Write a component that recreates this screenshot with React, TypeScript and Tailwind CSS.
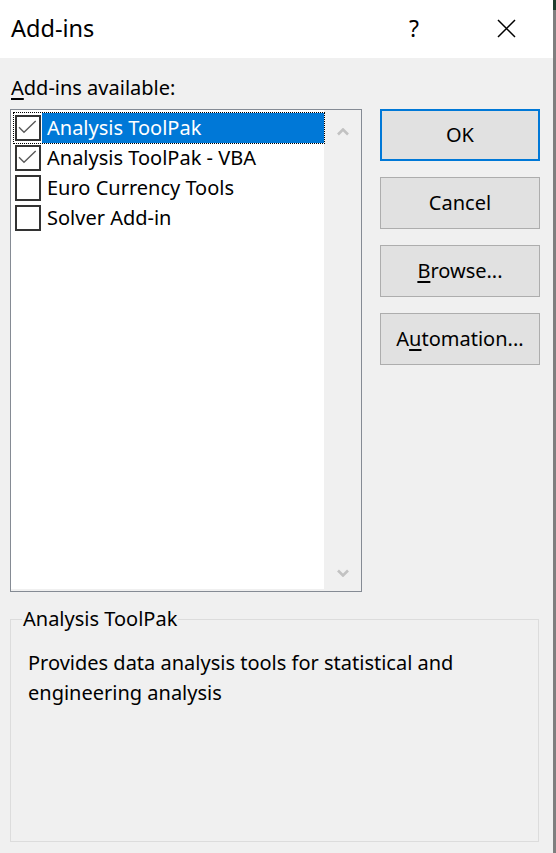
import React from 'react';

const font = { fontFamily: '"Noto Sans", "Liberation Sans", sans-serif' };

const items = [
  { label: 'Analysis ToolPak', checked: true, selected: true },
  { label: 'Analysis ToolPak - VBA', checked: true, selected: false },
  { label: 'Euro Currency Tools', checked: false, selected: false },
  { label: 'Solver Add-in', checked: false, selected: false },
];

const Check = () => (
  <svg width="22" height="22" viewBox="0 0 22 22" className="block">
    <polyline points="2,10.3 7,15.3 18.7,4" fill="none" stroke="#5a5a5a" strokeWidth="1.4" />
  </svg>
);

const Chevron = ({ down }: { down?: boolean }) => (
  <svg width="12" height="8" viewBox="0 0 12 8" className="block">
    <polyline
      points={down ? '1,1.5 6,6.5 11,1.5' : '1,6.5 6,1.5 11,6.5'}
      fill="none"
      stroke="#c2c2c2"
      strokeWidth="2.6"
    />
  </svg>
);

const Button = ({ children, primary }: { children: React.ReactNode; primary?: boolean }) => (
  <div
    className={
      'w-[160px] h-[52px] flex items-center justify-center bg-[#e1e1e1] text-[20px] text-black ' +
      (primary ? 'border-2 border-[#0078d7]' : 'border border-[#adadad]')
    }
  >
    {children}
  </div>
);

export default function App() {
  return (
    <div className="w-[556px] h-[853px] flex overflow-hidden" style={font}>
      <div className="w-[553px] h-full flex flex-col bg-[#f0f0f0]">
        {/* title bar */}
        <div className="h-[58px] bg-white flex items-start pt-[14px] pl-[11px]">
          <span className="text-[23.5px] leading-[28px] text-black">Add-ins</span>
          <span className="ml-auto mr-[78px] pl-[1px] text-[23px] leading-[28px] text-black">?</span>
          <div className="mt-[5px] mr-[37px]">
            <svg width="19" height="19" viewBox="0 0 19 19" className="block">
              <path d="M1 1 L18 18 M18 1 L1 18" stroke="#000" strokeWidth="1.5" fill="none" />
            </svg>
          </div>
        </div>

        {/* body */}
        <div className="flex-1 flex flex-col pt-[18px]">
          <div className="pl-[11px] text-[20px] leading-[24px] text-black mb-[9px]">
            <span className="underline underline-offset-[3px]">A</span>dd-ins available:
          </div>

          <div className="flex pl-[10px] gap-[18px]">
            {/* list box */}
            <div className="w-[352px] h-[483px] border border-[#858b94] flex flex-col bg-[#f0f0f0]">
              <div className="flex flex-1">
                <div className="flex-1 bg-white pt-[3px] pl-[3px]">
                  {items.map((it) => (
                    <div
                      key={it.label}
                      className={
                        'h-[30px] flex items-center ' +
                        (it.selected ? 'outline outline-1 outline-dotted outline-black' : '')
                      }
                    >
                      <div className="ml-[1px] w-[26px] h-[26px] border-2 border-[#333333] flex items-center justify-center bg-white">
                        {it.checked && <Check />}
                      </div>
                      <div
                        className={
                          'flex-1 h-full ml-[1px] pl-[5px] flex items-center text-[20px] leading-[24px] ' +
                          (it.selected ? 'bg-[#0078d7] text-white' : 'text-black')
                        }
                      >
                        {it.label}
                      </div>
                    </div>
                  ))}
                </div>
                {/* scrollbar */}
                <div className="w-[37px] flex flex-col items-center justify-between pt-[18px] pb-[12px] pl-[1px]">
                  <Chevron />
                  <Chevron down />
                </div>
              </div>
              <div className="h-[2px]" />
            </div>

            {/* buttons */}
            <div className="flex flex-col gap-[16px]">
              <Button primary>OK</Button>
              <Button>Cancel</Button>
              <Button>
                <span className="underline underline-offset-[3px]">B</span>rowse...
              </Button>
              <Button>
                A<span className="underline underline-offset-[3px]">u</span>tomation...
              </Button>
            </div>
          </div>

          {/* description group */}
          <fieldset className="mt-[15px] ml-[10px] w-[529px] h-[235px] border border-[#dcdcdc] pt-[17px]">
            <legend className="ml-[11px] px-[1px] text-[20px] leading-[24px] text-black">Analysis ToolPak</legend>
            <p className="pl-[17px] text-[20px] leading-[30px] text-black">
              Provides data analysis tools for statistical and
              <br />
              engineering analysis
            </p>
          </fieldset>
        </div>
      </div>

      {/* edge of the window behind */}
      <div className="w-[3px] h-full flex flex-col bg-[#7f7f7f]">
        <div className="h-[10px] bg-[#1f3d2e]" />
      </div>
    </div>
  );
}
